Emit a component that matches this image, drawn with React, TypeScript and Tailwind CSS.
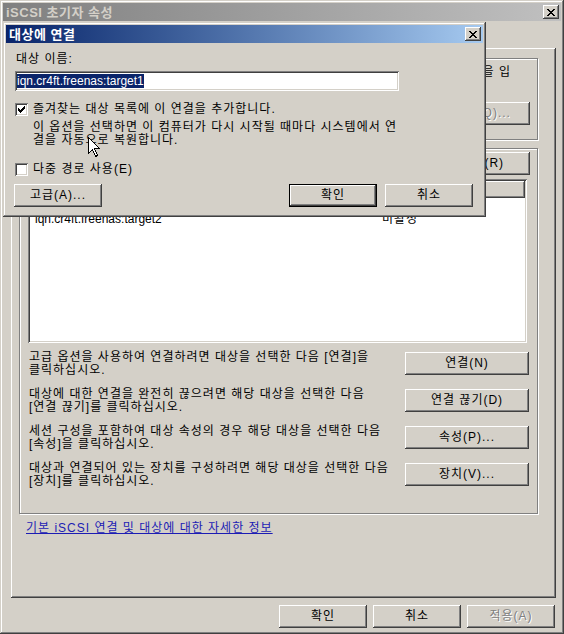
import React from "react";

const XGlyph = () => (
  <svg width="8" height="7" viewBox="0 0 8 7" shapeRendering="crispEdges">
    <rect x="0" y="0" width="2" height="1" fill="#000" />
    <rect x="6" y="0" width="2" height="1" fill="#000" />
    <rect x="1" y="1" width="2" height="1" fill="#000" />
    <rect x="5" y="1" width="2" height="1" fill="#000" />
    <rect x="2" y="2" width="4" height="1" fill="#000" />
    <rect x="3" y="3" width="2" height="1" fill="#000" />
    <rect x="2" y="4" width="4" height="1" fill="#000" />
    <rect x="1" y="5" width="2" height="1" fill="#000" />
    <rect x="5" y="5" width="2" height="1" fill="#000" />
    <rect x="0" y="6" width="2" height="1" fill="#000" />
    <rect x="6" y="6" width="2" height="1" fill="#000" />
  </svg>
);

const CheckGlyph = () => (
  <svg width="7" height="7" viewBox="0 0 7 7" shapeRendering="crispEdges">
    <rect x="6" y="0" width="1" height="1" fill="#000" />
    <rect x="5" y="1" width="2" height="1" fill="#000" />
    <rect x="0" y="2" width="1" height="1" fill="#000" />
    <rect x="4" y="2" width="3" height="1" fill="#000" />
    <rect x="0" y="3" width="2" height="1" fill="#000" />
    <rect x="3" y="3" width="3" height="1" fill="#000" />
    <rect x="0" y="4" width="5" height="1" fill="#000" />
    <rect x="1" y="5" width="3" height="1" fill="#000" />
    <rect x="2" y="6" width="1" height="1" fill="#000" />
  </svg>
);

function CloseBtn() {
  return (
    <div className="w-[16px] h-[14px] bg-[#d4d0c8] flex items-center justify-center shadow-[inset_-1px_-1px_#404040,inset_1px_1px_#ffffff,inset_-2px_-2px_#808080,inset_2px_2px_#d4d0c8]">
      <XGlyph />
    </div>
  );
}

function Btn({
  children,
  className = "",
  disabled = false,
  def = false,
}: {
  children?: React.ReactNode;
  className?: string;
  disabled?: boolean;
  def?: boolean;
}) {
  if (def) {
    return (
      <div className={"h-[23px] border border-black flex " + className}>
        <div className="flex-1 flex items-center justify-center bg-[#d4d0c8] shadow-[inset_-1px_-1px_#404040,inset_1px_1px_#ffffff,inset_-2px_-2px_#808080,inset_2px_2px_#d4d0c8]">
          {children}
        </div>
      </div>
    );
  }
  return (
    <div
      className={
        "h-[23px] flex items-center justify-center bg-[#d4d0c8] shadow-[inset_-1px_-1px_#404040,inset_1px_1px_#ffffff,inset_-2px_-2px_#808080,inset_2px_2px_#d4d0c8] " +
        (disabled ? "text-[#808080] [text-shadow:1px_1px_0_#ffffff] " : "") +
        className
      }
    >
      {children}
    </div>
  );
}

function CheckBox({ checked }: { checked: boolean }) {
  return (
    <div className="w-[13px] h-[13px] bg-white flex items-center justify-center shadow-[inset_1px_1px_#808080,inset_-1px_-1px_#ffffff,inset_2px_2px_#404040,inset_-2px_-2px_#d4d0c8]">
      {checked ? <CheckGlyph /> : null}
    </div>
  );
}

export default function App() {
  return (
    <div className="relative w-[564px] h-[634px] overflow-hidden bg-[#d4d0c8] p-[3px] flex flex-col text-[12px] leading-[13px] tracking-[1px] text-black font-['Liberation_Sans','Noto_Sans_CJK_KR',sans-serif] shadow-[inset_-1px_-1px_#404040,inset_1px_1px_#d4d0c8,inset_-2px_-2px_#808080,inset_2px_2px_#ffffff]">
      {/* Main window title bar (inactive) */}
      <div className="h-[18px] flex items-center justify-between pl-[3px] pr-[2px] bg-gradient-to-r from-[#808080] to-[#c0c0c0]">
        <span className="font-bold text-[#d4d0c8] text-[13px] tracking-[0.5px]">iSCSI 초기자 속성</span>
        <CloseBtn />
      </div>

      <div className="pl-[8px] pr-[6px] flex flex-col">
        {/* tab strip (covered by the dialog) */}
        <div className="h-[27px]" />

        {/* tab panel */}
        <div className="w-[545px] h-[550px] pl-[8px] pt-[10px] flex flex-col shadow-[inset_-1px_-1px_#404040,inset_1px_1px_#ffffff,inset_-2px_-2px_#808080]">
          {/* Group 1 */}
          <div className="w-[519px] h-[82px] border border-[#808080] shadow-[1px_1px_0_#ffffff,inset_1px_1px_0_#ffffff] flex flex-col">
            <div className="mt-[7px] ml-[9px] w-[482px] flex justify-end whitespace-nowrap">
              <span>로그온하려면 대상의 IP 주소 또는 DNS 이름을 입</span>
            </div>
            <div className="mt-[23px] flex items-center justify-end pr-[7px]">
              <Btn disabled className="w-[124px]">빠른 연결(Q)...</Btn>
            </div>
          </div>

          {/* Group 2 */}
          <div className="mt-[8px] w-[519px] h-[366px] border border-[#808080] shadow-[1px_1px_0_#ffffff,inset_1px_1px_0_#ffffff] flex flex-col pt-[3px]">
            <div className="flex justify-end pr-[7px]">
              <Btn className="w-[124px]">새로 고침(R)</Btn>
            </div>
            <div className="mt-[4px] ml-[8px] w-[499px] h-[164px] bg-white p-[2px] flex flex-col shadow-[inset_1px_1px_#808080,inset_-1px_-1px_#ffffff,inset_2px_2px_#404040,inset_-2px_-2px_#d4d0c8]">
              <div className="flex h-[17px]">
                <div className="w-[346px] bg-[#d4d0c8] shadow-[inset_-1px_-1px_#404040,inset_1px_1px_#ffffff,inset_-2px_-2px_#808080]" />
                <div className="flex-1 bg-[#d4d0c8] shadow-[inset_-1px_-1px_#404040,inset_1px_1px_#ffffff,inset_-2px_-2px_#808080]" />
              </div>
              <div className="h-[14px]" />
              <div className="flex h-[14px] leading-[14px]">
                <span className="w-[346px] pl-[5px] tracking-normal">iqn.cr4ft.freenas:target2</span>
                <span className="pl-[6px]">비활성</span>
              </div>
            </div>

            <div className="mt-[9px] flex flex-col gap-[12px]">
              {[
                ["고급 옵션을 사용하여 연결하려면 대상을 선택한 다음 [연결]을", "클릭하십시오.", "연결(N)"],
                ["대상에 대한 연결을 완전히 끊으려면 해당 대상을 선택한 다음", "[연결 끊기]를 클릭하십시오.", "연결 끊기(D)"],
                ["세션 구성을 포함하여 대상 속성의 경우 해당 대상을 선택한 다음", "[속성]을 클릭하십시오.", "속성(P)..."],
                ["대상과 연결되어 있는 장치를 구성하려면 해당 대상을 선택한 다음", "[장치]를 클릭하십시오.", "장치(V)..."],
              ].map(([a, b, c]) => (
                <div key={c} className="flex items-start justify-between pl-[9px] pr-[8px]">
                  <div className="-mt-[1px] flex flex-col leading-[13px] whitespace-nowrap">
                    <span>{a}</span>
                    <span>{b}</span>
                  </div>
                  <Btn className="w-[124px]">{c}</Btn>
                </div>
              ))}
            </div>
          </div>

          <div className="mt-[7px] pl-[7px] leading-[14px]">
            <span className="text-[#1c1cb4] underline">기본 iSCSI 연결 및 대상에 대한 자세한 정보</span>
          </div>
        </div>

        {/* bottom buttons */}
        <div className="mt-[7px] flex justify-end gap-[6px]">
          <Btn className="w-[88px]">확인</Btn>
          <Btn className="w-[88px]">취소</Btn>
          <Btn disabled className="w-[88px]">적용(A)</Btn>
        </div>
      </div>

      {/* Connect dialog (overlay window) */}
      <div className="absolute left-[3px] top-[22px] w-[483px] h-[195px] bg-[#d4d0c8] p-[3px] flex flex-col shadow-[inset_-1px_-1px_#404040,inset_1px_1px_#d4d0c8,inset_-2px_-2px_#808080,inset_2px_2px_#ffffff]">
        <div className="h-[18px] flex items-center justify-between pl-[3px] pr-[2px] bg-gradient-to-r from-[#0a246a] to-[#a6caf0]">
          <span className="font-bold text-white text-[13px] tracking-[0.5px]">대상에 연결</span>
          <CloseBtn />
        </div>
        <div className="flex flex-col pl-[9px]">
          <div className="mt-[10px] pl-[1px]">대상 이름:</div>
          <div className="mt-[5px] w-[384px] h-[20px] bg-white pl-[2px] pt-[3px] shadow-[inset_1px_1px_#808080,inset_-1px_-1px_#ffffff,inset_2px_2px_#404040,inset_-2px_-2px_#d4d0c8]">
            <span className="bg-[#0a246a] text-white leading-[14px] inline-block tracking-normal">iqn.cr4ft.freenas:target1</span>
          </div>
          <div className="mt-[12px] flex items-center gap-[5px]">
            <CheckBox checked />
            <span>즐겨찾는 대상 목록에 이 연결을 추가합니다.</span>
          </div>
          <div className="mt-[5px] ml-[18px] flex flex-col leading-[13px]">
            <span>이 옵션을 선택하면 이 컴퓨터가 다시 시작될 때마다 시스템에서 연</span>
            <span>결을 자동으로 복원합니다.</span>
          </div>
          <div className="mt-[16px] flex items-center gap-[5px]">
            <CheckBox checked={false} />
            <span>다중 경로 사용(E)</span>
          </div>
          <div className="mt-[8px] flex items-center pr-[10px] -ml-[1px]">
            <Btn className="w-[88px]">고급(A)...</Btn>
            <div className="flex-1" />
            <Btn def className="w-[88px]">확인</Btn>
            <Btn className="w-[88px] ml-[8px]">취소</Btn>
          </div>
        </div>
      </div>

      {/* mouse cursor */}
      <svg className="absolute left-[88px] top-[137px]" width="12" height="20" viewBox="0 0 12 20" shapeRendering="crispEdges">
        <path d="M0.5 0.5 L0.5 16.5 L4.5 12.5 L7.5 19.5 L9.5 18.5 L6.5 11.5 L11.5 11.5 Z" fill="#fff" stroke="#000" strokeWidth="1" />
      </svg>
    </div>
  );
}
